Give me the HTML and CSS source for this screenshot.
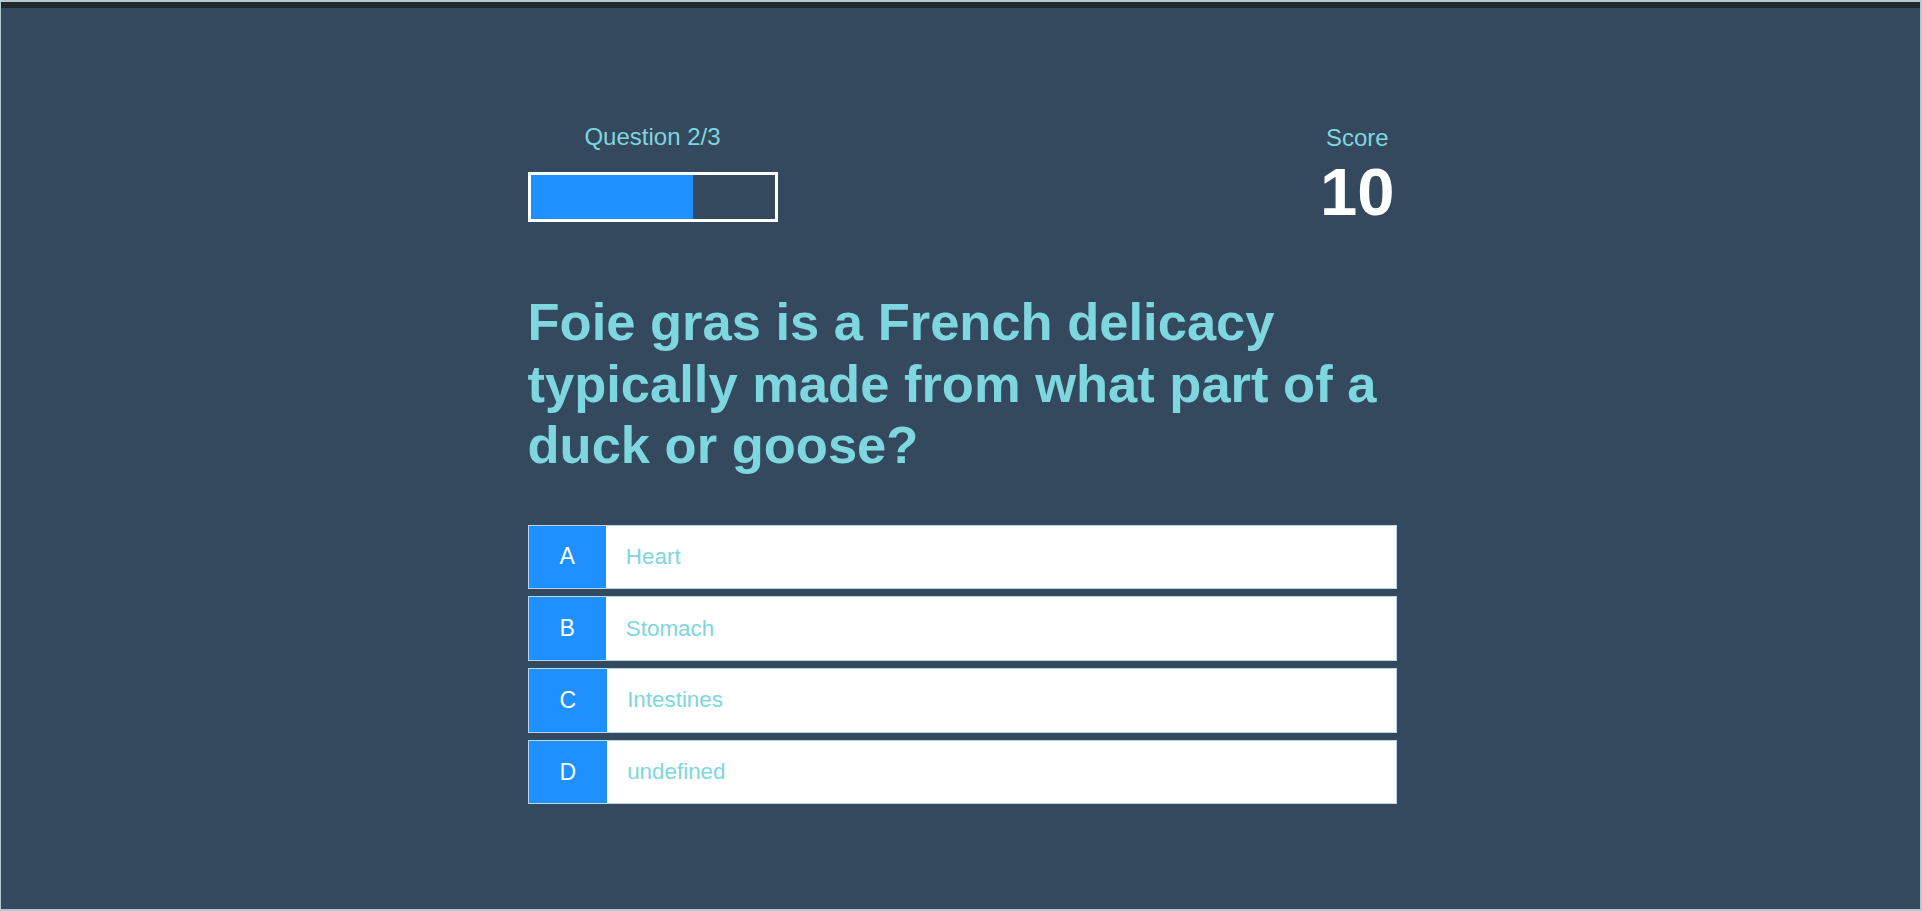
FILE: index.html
```html
<!DOCTYPE html>
<html lang="en">
<head>
<meta charset="utf-8">
<title>Quick Quiz</title>
<link rel="stylesheet" href="styles.css">
</head>
<body>
<div class="frame">
  <main class="game">
    <div class="hud">
      <div class="hud-item">
        <p class="hud-prefix">Question 2/3</p>
        <div class="progress-bar">
          <div class="progress-fill" style="width: 66.67%"></div>
        </div>
      </div>
      <div class="hud-item score-item">
        <p class="hud-prefix score-label">Score</p>
        <h1 class="hud-main">10</h1>
      </div>
    </div>
    <h2 class="question">Foie gras is a French delicacy typically made from what part of a duck or goose?</h2>
    <div class="choices">
      <div class="choice-container">
        <p class="choice-prefix">A</p>
        <p class="choice-text">Heart</p>
      </div>
      <div class="choice-container">
        <p class="choice-prefix">B</p>
        <p class="choice-text">Stomach</p>
      </div>
      <div class="choice-container">
        <p class="choice-prefix">C</p>
        <p class="choice-text">Intestines</p>
      </div>
      <div class="choice-container">
        <p class="choice-prefix">D</p>
        <p class="choice-text">undefined</p>
      </div>
    </div>
  </main>
</div>
</body>
</html>
```

FILE: styles.css
```css
* {
  box-sizing: border-box;
}

html, body {
  margin: 0;
  padding: 0;
}

body {
  background: #b7c9d0;
  font-family: "Liberation Sans", Arial, sans-serif;
  padding: 2px 2px 2px 1px;
  height: 911px;
}

.frame {
  height: 907px;
  background: #34495e;
  border-top: 6px solid #22282c;
  padding-top: 114.5px;
  padding-left: 3px;
  display: flex;
  justify-content: center;
  align-items: flex-start;
}

.game {
  width: 869px;
  display: flex;
  flex-direction: column;
}

.hud {
  display: flex;
  justify-content: space-between;
  align-items: flex-start;
  height: 101px;
}

.hud-item {
  display: flex;
  flex-direction: column;
  align-items: center;
}

.hud-prefix {
  margin: 0 0 21px 0;
  color: #7ed6df;
  font-size: 24px;
  line-height: 28px;
  text-align: center;
}

.score-item {
  padding-top: 1px;
  margin-right: 2px;
}

.score-label {
  margin: 0;
}

.hud-main {
  margin: 7px 0 0 0;
  color: #ffffff;
  font-size: 67px;
  line-height: 66px;
  font-weight: 700;
}

.progress-bar {
  width: 250px;
  height: 50px;
  border: 3px solid #ffffff;
}

.progress-fill {
  height: 100%;
  background: #1e90ff;
}

.question {
  margin: 67.5px 0 48.5px 0;
  color: #7ed6df;
  font-size: 52.5px;
  line-height: 61.7px;
  font-weight: 700;
}

.choices {
  display: flex;
  flex-direction: column;
  gap: 7px;
}

.choice-container {
  display: flex;
  height: 64.7px;
  background: #ffffff;
  border: 1px solid #b8d6f2;
}

.choice-prefix {
  margin: 0;
  padding: 0 31px;
  background: #1e90ff;
  color: #ffffff;
  font-size: 23px;
  display: flex;
  align-items: center;
}

.choice-text {
  margin: 0;
  padding: 0 20px;
  color: #7ed6df;
  font-size: 22.4px;
  display: flex;
  align-items: center;
  flex: 1;
}
```
